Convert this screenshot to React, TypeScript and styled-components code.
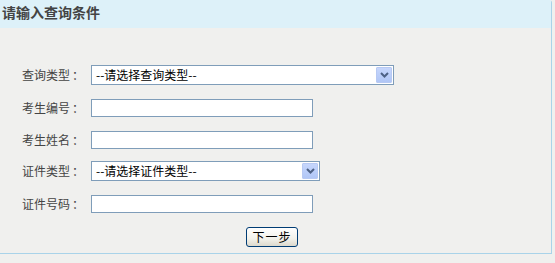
import styled, { createGlobalStyle } from 'styled-components';

const GlobalStyle = createGlobalStyle`
  html, body {
    margin: 0;
    padding: 0;
    background: #f0f0ee;
  }
  body {
    font-family: "Noto Sans CJK SC", "Liberation Sans", sans-serif;
    font-size: 12px;
  }
`;

const Panel = styled.div`
  width: 551px;
  border-right: 1px solid #a9d3e9;
  border-bottom: 1px solid #a9d3e9;
  border-top-right-radius: 3px;
  background: #f0f0ee;
`;

const Header = styled.div`
  height: 28px;
  display: flex;
  align-items: center;
  padding-left: 2px;
  padding-bottom: 5px;
  box-sizing: border-box;
  background: #ddf1f9;
  color: #444;
  font-size: 14px;
  font-weight: bold;
  line-height: 1;
`;

const Form = styled.form`
  display: flex;
  flex-direction: column;
  padding: 37px 0 6px 22px;
`;

const Row = styled.div<{ $gap?: number }>`
  display: flex;
  align-items: center;
  margin-top: ${(p) => p.$gap ?? 0}px;
`;

const Label = styled.label`
  width: 69px;
  flex-shrink: 0;
  color: #444;
  font-size: 12px;
  line-height: 14px;
  white-space: nowrap;
`;

const Colon = styled.span`
  margin-left: 2px;
`;

const TextInput = styled.input`
  width: 222px;
  height: 18px;
  box-sizing: border-box;
  border: 1px solid #7f9db9;
  background: #fff;
  padding: 0 3px;
  font-family: inherit;
  font-size: 12px;
  outline: none;
`;

const Select = styled.div<{ $width: number }>`
  width: ${(p) => p.$width}px;
  height: 20px;
  box-sizing: border-box;
  border: 1px solid #7f9db9;
  background: #fff;
  display: flex;
  align-items: center;
  justify-content: space-between;
  padding: 1px 1px 1px 4px;
  color: #000;
  font-size: 12px;
  line-height: 14px;
`;

const ArrowBox = styled.span`
  width: 16px;
  height: 16px;
  box-sizing: border-box;
  border: 1px solid #b7c9f3;
  border-radius: 1px;
  background: linear-gradient(#c6d6fc, #b0c6f6);
  display: flex;
  align-items: center;
  justify-content: center;
`;

const Actions = styled.div`
  display: flex;
  margin-top: 14px;
  padding-left: 224px;
`;

const Button = styled.button`
  width: 52px;
  height: 20px;
  border: 1px solid #003c74;
  border-radius: 3px;
  background: linear-gradient(#ffffff, #f2f1ea 60%, #dcd9cd);
  font-family: inherit;
  font-size: 12px;
  line-height: 14px;
  color: #000;
  padding: 0;
  letter-spacing: 1px;
`;

const Arrow = () => (
  <svg width="9" height="6" viewBox="0 0 9 6">
    <path d="M1 1 L4.5 4.5 L8 1" fill="none" stroke="#4d6185" strokeWidth="2" />
  </svg>
);

const FieldLabel = ({ text }: { text: string }) => (
  <Label>
    {text}
    <Colon>：</Colon>
  </Label>
);

export default function App() {
  return (
    <>
      <GlobalStyle />
      <Panel>
        <Header>请输入查询条件</Header>
        <Form onSubmit={(e) => e.preventDefault()}>
          <Row>
            <FieldLabel text="查询类型" />
            <Select $width={303}>
              <span>--请选择查询类型--</span>
              <ArrowBox><Arrow /></ArrowBox>
            </Select>
          </Row>
          <Row $gap={14}>
            <FieldLabel text="考生编号" />
            <TextInput />
          </Row>
          <Row $gap={14}>
            <FieldLabel text="考生姓名" />
            <TextInput />
          </Row>
          <Row $gap={12}>
            <FieldLabel text="证件类型" />
            <Select $width={229}>
              <span>--请选择证件类型--</span>
              <ArrowBox><Arrow /></ArrowBox>
            </Select>
          </Row>
          <Row $gap={14}>
            <FieldLabel text="证件号码" />
            <TextInput />
          </Row>
          <Actions>
            <Button type="submit">下一步</Button>
          </Actions>
        </Form>
      </Panel>
    </>
  );
}
